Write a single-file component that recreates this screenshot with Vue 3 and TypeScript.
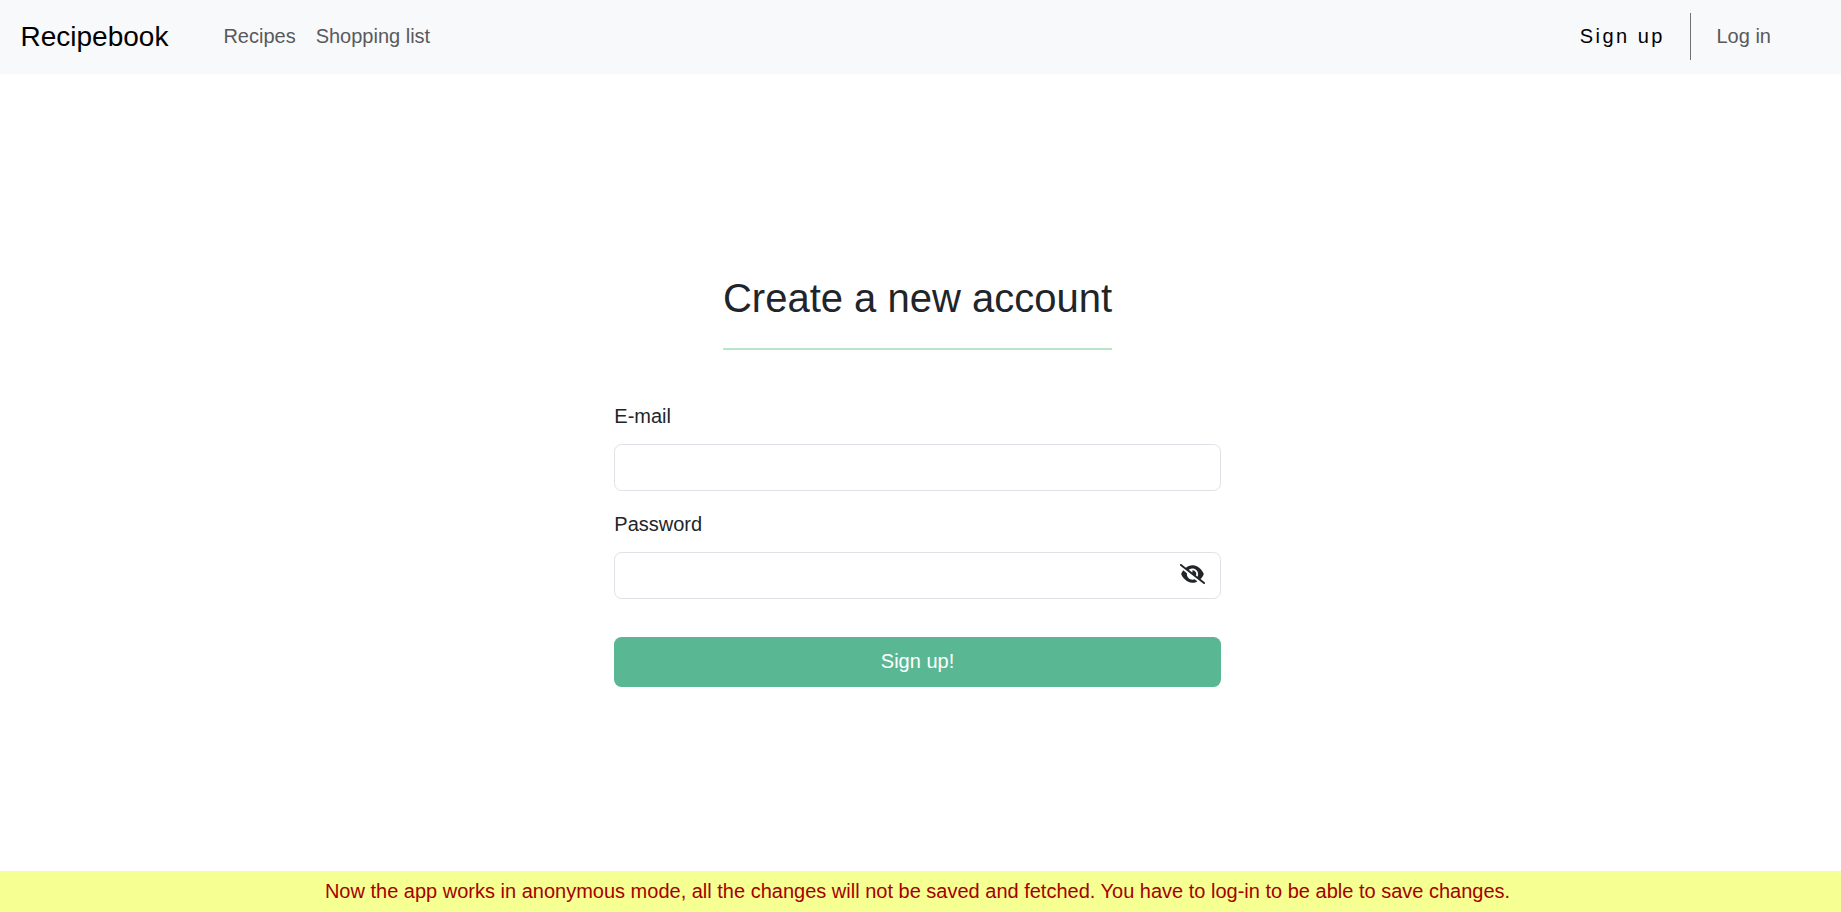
<script setup lang="ts">
import { ref } from 'vue'

const email = ref('')
const password = ref('')
const visible = ref(false)
const links: string[] = ['Recipes', 'Shopping list']
</script>

<template>
  <div class="page">
    <header class="navbar">
      <a class="brand">Recipebook</a>
      <nav class="links">
        <a v-for="link in links" :key="link" class="link">{{ link }}</a>
      </nav>
      <nav class="auth">
        <a class="signup">Sign up</a>
        <span class="divider"></span>
        <a class="link">Log in</a>
      </nav>
    </header>

    <main class="content">
      <h1 class="title">Create a new account</h1>
      <form class="form" @submit.prevent>
        <label class="label" for="email">E-mail</label>
        <input id="email" v-model="email" class="field" type="email" />
        <label class="label" for="password">Password</label>
        <div class="password">
          <input id="password" v-model="password" class="field" :type="visible ? 'text' : 'password'" />
          <svg class="eye" viewBox="0 0 640 512" @click="visible = !visible">
            <path d="M38.8 5.1C28.4-3.1 13.3-1.2 5.1 9.2S-1.2 34.7 9.2 42.9l592 464c10.4 8.2 25.5 6.3 33.7-4.1s6.3-25.5-4.1-33.7L525.6 386.7c39.6-40.6 66.4-86.1 79.9-118.4c3.3-7.9 3.3-16.7 0-24.6c-14.9-35.7-46.2-87.7-93-131.1C465.5 68.8 400.8 32 320 32c-68.2 0-125 26.3-169.3 60.8L38.8 5.1zM223.1 149.5C248.6 126.2 282.7 112 320 112c79.5 0 144 64.5 144 144c0 24.9-6.3 48.3-17.4 68.7L408 294.5c8.4-19.3 10.6-41.4 4.8-63.3c-11.1-41.5-47.8-69.4-88.6-71.1c-5.8-.2-9.2 6.1-7.4 11.7c2.1 6.4 3.3 13.2 3.3 20.3c0 10.2-2.4 19.8-6.6 28.3l-90.3-70.8zM373 389.9c-16.4 6.5-34.3 10.1-53 10.1c-79.5 0-144-64.5-144-144c0-6.9 .5-13.6 1.4-20.2L83.1 161.5C60.3 191.2 44 220.8 34.5 243.7c-3.3 7.9-3.3 16.7 0 24.6c14.9 35.7 46.2 87.7 93 131.1C174.5 443.2 239.2 480 320 480c47.8 0 89.9-12.9 126.2-32.5L373 389.9z" />
          </svg>
        </div>
        <button class="submit" type="submit">Sign up!</button>
      </form>
    </main>

    <footer class="notice">
      Now the app works in anonymous mode, all the changes will not be saved and fetched. You have to log-in to be able to save changes.
    </footer>
  </div>
</template>

<style>
body {
  margin: 0;
  background: #fff;
}
</style>

<style scoped>
.page {
  display: flex;
  flex-direction: column;
  height: 100vh;
  overflow: hidden;
  font-family: "Liberation Sans", Arial, sans-serif;
  font-size: 20px;
  line-height: 30px;
  color: #212529;
}
.page * {
  box-sizing: border-box;
}
.navbar {
  display: flex;
  align-items: center;
  flex: none;
  height: 74px;
  padding: 0 70px 1px 20.5px;
  background: #f8f9fb;
}
.brand {
  margin-right: 55px;
  font-size: 28px;
  color: #000;
}
.links {
  display: flex;
  gap: 20px;
}
.link,
.signup {
  padding-bottom: 1px;
}
.link {
  color: #595a5b;
}
.auth {
  display: flex;
  align-items: center;
  margin-left: auto;
}
.signup {
  letter-spacing: 2.5px;
  color: #000;
}
.divider {
  width: 1px;
  height: 47px;
  margin: 0 25.5px 0 25px;
  background: #6f7173;
}
.content {
  display: flex;
  flex: 1;
  flex-direction: column;
  align-items: center;
  padding: 200px 6px 0 0;
}
.title {
  margin: 0;
  padding-bottom: 26px;
  border-bottom: 2px solid #b9e6c9;
  font-size: 40px;
  font-weight: 400;
  line-height: 48px;
}
.form {
  display: flex;
  flex-direction: column;
  width: 606.4px;
  margin-top: 51px;
}
.label {
  margin-bottom: 13px;
}
.field {
  display: block;
  width: 100%;
  height: 47px;
  margin: 0 0 18px;
  padding: 7px 15px;
  border: 1px solid #dee2e6;
  border-radius: 7.5px;
  outline: none;
  background: #fff;
  color: #212529;
  font: inherit;
}
.password {
  position: relative;
}
.eye {
  position: absolute;
  top: 12px;
  right: 16px;
  width: 25px;
  height: 20px;
  fill: #212529;
}
.submit {
  height: 50px;
  margin-top: 20px;
  padding: 0 0 2px;
  border: 0;
  border-radius: 7.5px;
  background: #5ab793;
  color: #fff;
  font: inherit;
}
.notice {
  flex: none;
  height: 41px;
  padding: 5px 6px 0 0;
  background: #f6ff92;
  color: #a50000;
  text-align: center;
}
</style>
